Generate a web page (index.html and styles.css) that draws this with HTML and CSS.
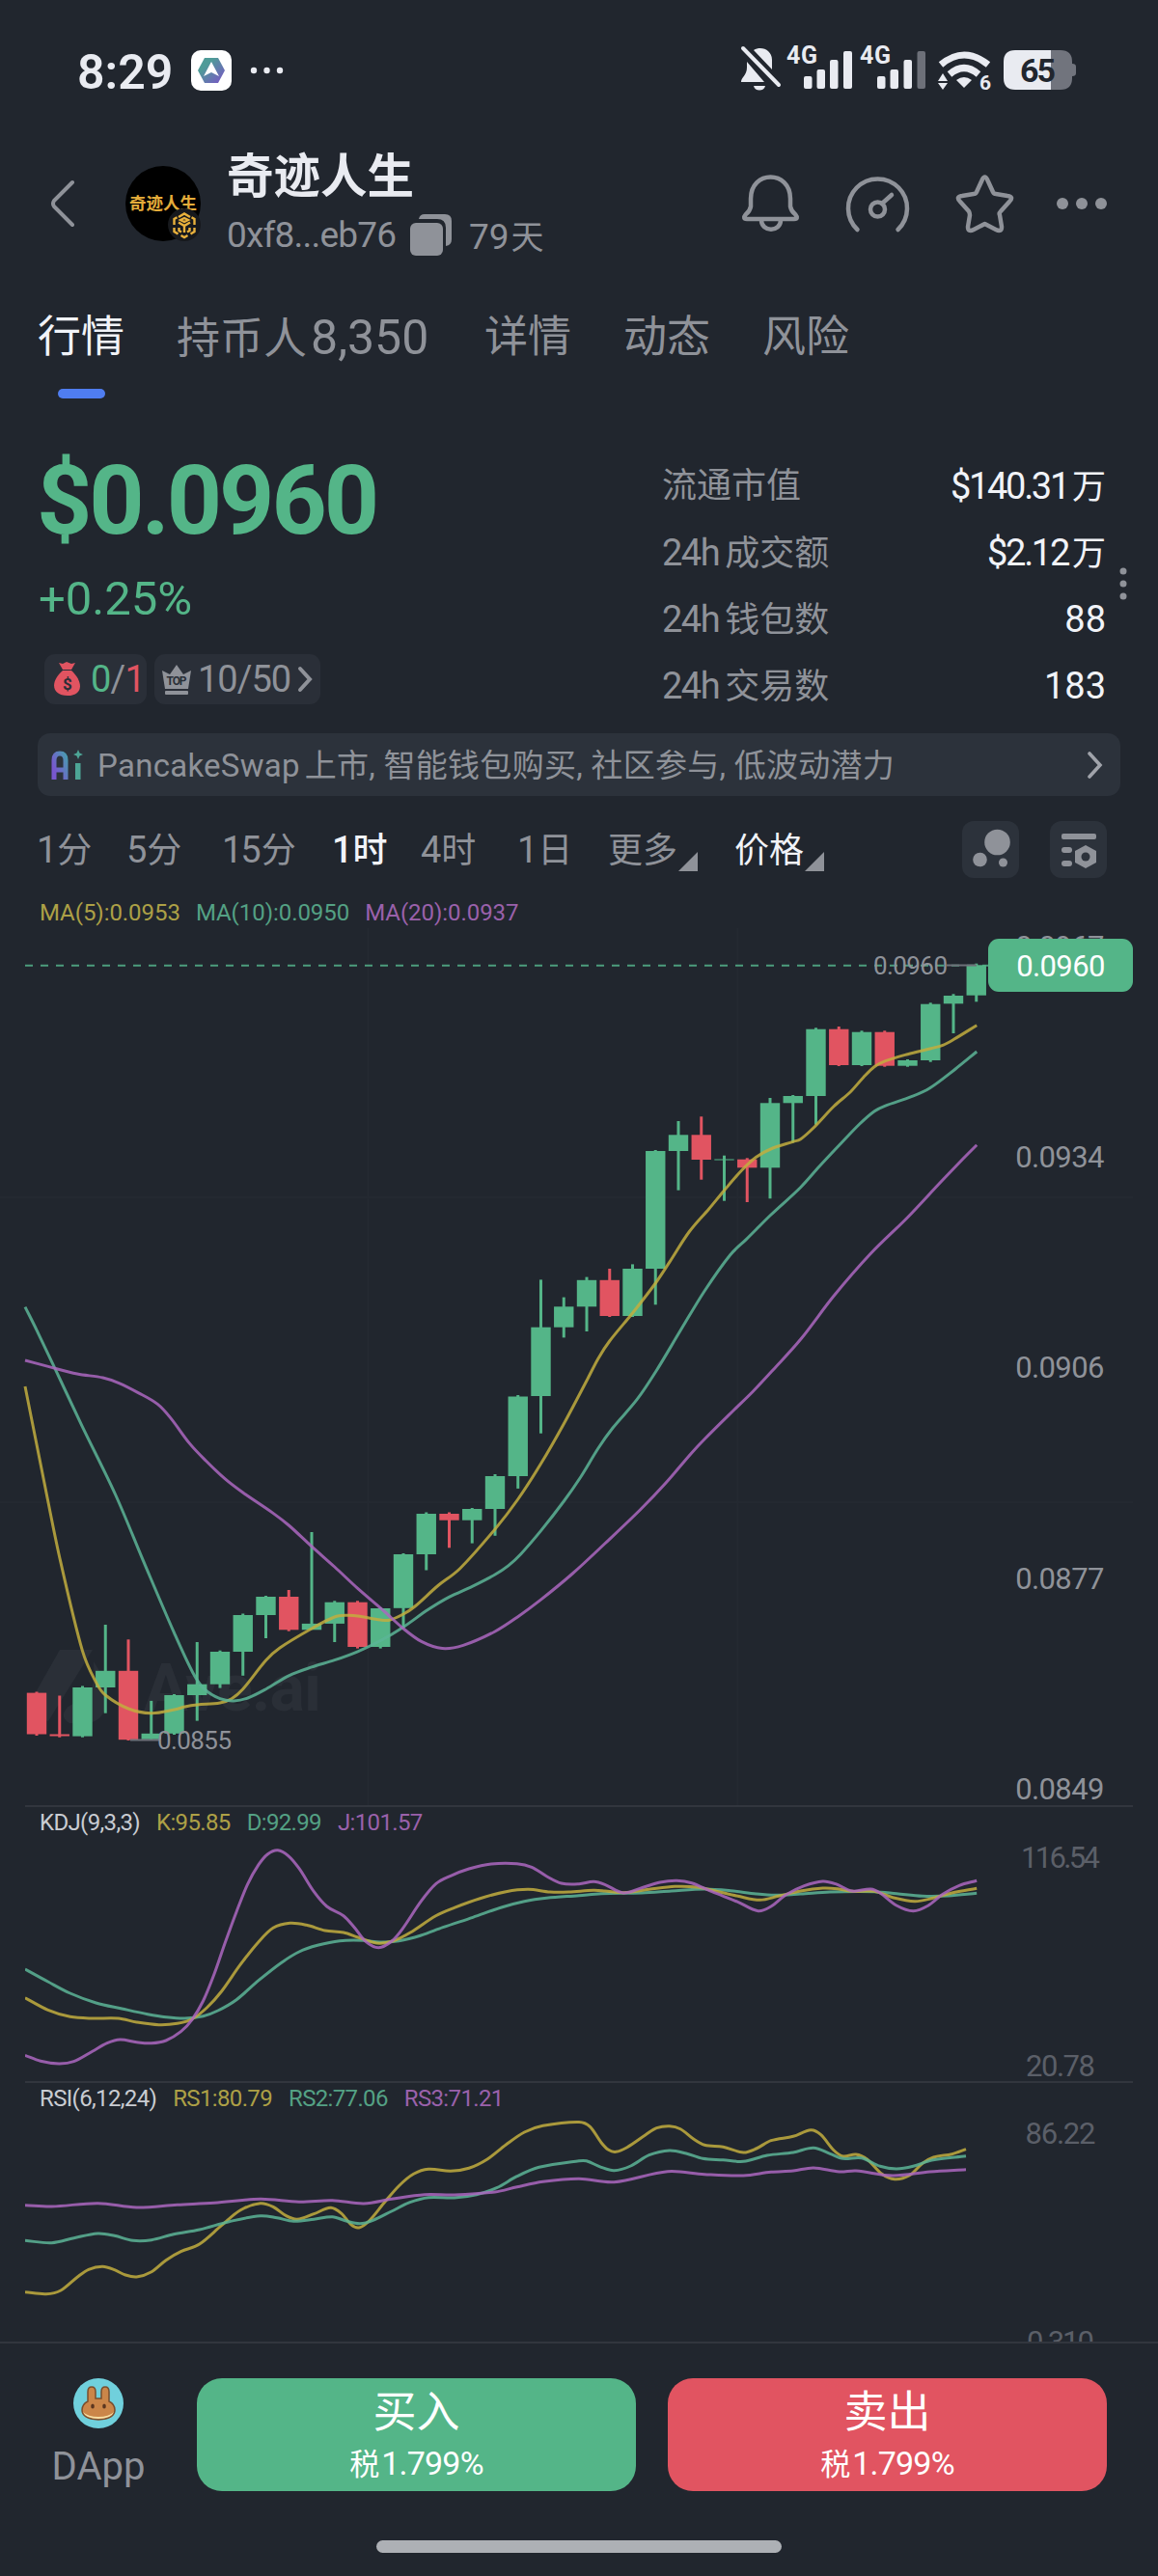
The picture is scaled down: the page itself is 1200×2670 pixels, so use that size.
FILE: index.html
```html
<!DOCTYPE html>
<html lang="zh-CN">

<head>
    <meta charset="UTF-8">
    <meta name="viewport" content="width=device-width, initial-scale=1.0">
    <title>奇迹人生</title>
    <link rel="stylesheet" href="styles.css">
</head>

<body>
    <!-- 状态栏 -->
    <div class="status">
        <span class="time">8:29</span>
        <svg class="app-icon" width="42" height="42" viewBox="0 0 42 42">
            <defs>
                <linearGradient id="hex" x1="0" y1="0" x2="1" y2="1">
                    <stop offset="0.3" stop-color="#4f9b98" />
                    <stop offset="1" stop-color="#7b52c8" />
                </linearGradient>
            </defs>
            <rect width="42" height="42" rx="10" fill="#fff" />
            <path d="M14 8h14l7 13-7 13H14L7 21z" fill="url(#hex)" />
            <path d="M21 12l8 15-8-4-8 4z" fill="#fff" />
        </svg>
        <svg class="more-dots" width="36" height="8" viewBox="0 0 36 8" fill="#e9ebf1">
            <circle cx="4" cy="4" r="3.2" /><circle cx="17.5" cy="4" r="3.2" /><circle cx="31" cy="4" r="3.2" />
        </svg>
        <svg class="signals" width="355" height="80" viewBox="765 33 355 80" fill="#e9ebf1">
            <!-- 静音 -->
            <path d="M781 52c8-5 19 0 19 10v10zM774 64l18 21h-24c0-5 6-7 6-15zM781 89h12c-1 6-11 6-12 0z" />
            <path d="M770 50l37 38" stroke="#e9ebf1" stroke-width="4" stroke-linecap="round" />
            <!-- 信号 -->
            <text x="815" y="66" class="net" textLength="32">4G</text>
            <rect x="833" y="79" width="8.5" height="13" rx="2" />
            <rect x="846.5" y="72" width="8.5" height="20" rx="2" />
            <rect x="860" y="62" width="8.5" height="30" rx="2" />
            <rect x="874" y="53" width="9" height="39" rx="2" />
            <text x="891" y="66" class="net" textLength="32">4G</text>
            <rect x="909" y="79" width="8.5" height="13" rx="2" />
            <rect x="922.5" y="72" width="8.5" height="20" rx="2" />
            <rect x="936.5" y="62" width="8.5" height="30" rx="2" />
            <rect x="950.5" y="53" width="8.5" height="39" rx="2" fill="#6d7079" />
            <!-- wifi -->
            <g fill="none" stroke="#e9ebf1" stroke-width="7">
                <path d="M975 67q24-20 49 0" />
                <path d="M984 77q15-13 30 0" />
            </g>
            <path d="M991 83q8-6 16 0l-8 8z" />
            <path d="M972 84l5-8 5 8zM972 86h10l-5 7z" />
            <text x="1015" y="93" class="wifi-num">6</text>
            <!-- 电量 -->
            <path d="M1052 52h37v41h-37q-12 0-12-12V64q0-12 12-12z" />
            <path d="M1089 52h10q12 0 12 12v2q4 0 4 3v7q0 3-4 3v2q0 12-12 12h-10z" fill="#71747d" />
            <text x="1057" y="85" class="battery" textLength="37">65</text>
        </svg>
    </div>

    <!-- 头部 -->
    <div class="header">
        <svg class="back" width="26" height="50" viewBox="0 0 26 50">
            <path d="M23 3L4 22q-2 3 0 6L23 47" fill="none" stroke="#8f9299" stroke-width="4" stroke-linecap="round" />
        </svg>
        <svg class="avatar" width="80" height="80" viewBox="0 0 80 80">
            <circle cx="39" cy="40" r="39" fill="#000" />
            <text x="4" y="46" class="avatar-text" textLength="70">奇迹人生</text>
            <circle cx="61" cy="62" r="17" fill="#17191d" />
            <g fill="none" stroke="#e9b13c" stroke-width="2.4">
                <path d="M55 54l6-3.500 6 3.500M50.500 62v-6l3-1.800M71.500 62v-6l-3-1.800M50.500 65v4l4 2.500M71.500 65v4l-4 2.500M57.500 73l3.500 2 3.500-2" />
                <path d="M55 59.500l6 3.500 6-3.500M61 63v7M55.500 65v3l2.500 1.500M66.500 65v3l-2.500 1.500M57 57l4-2 4 2-4 2z" />
            </g>
        </svg>
        <div class="title">
            <h1>奇迹人生</h1>
            <div class="sub">
                <span class="addr">0xf8...eb76</span>
                <svg width="45" height="43" viewBox="0 0 45 43" fill="#8f9299">
                    <path d="M9 5q1-5 6-5h21q7 0 7 7v19q0 6-6 7V14q0-9-9-9z" />
                    <rect x="0" y="9" width="34" height="34" rx="6" />
                </svg>
                <span class="age"><span class="num">79</span>天</span>
            </div>
        </div>
        <svg class="actions" width="390" height="66" viewBox="765 178 390 66" fill="none" stroke="#8f9299"
            stroke-width="4.5" stroke-linecap="round" stroke-linejoin="round">
            <path d="M779 206c0-30 41-30 41 0v8q1 5 5 8 4 5-1 5h-49q-5 0-1-5 4-3 5-8z" />
            <path d="M790 228c0 13 20 13 20 0" />
            <path d="M889.5 238a30.500 30.500 0 1 1 42 0" />
            <circle cx="910.5" cy="217" r="7.5" />
            <path d="M915 211l10-9" />
            <path d="M1018.500 187q3-7 6 0l5.500 12q1 2 3 2l12 2q7 1 2 6l-9 10q-2 2-1 4l2 12q0 6-6 3l-11.500-6-11.500 6q-6 3-6-3l2-12q0-2-1-4l-9-10q-5-5 2-6l12-2q2 0 3-2z" />
            <g fill="#8f9299" stroke="none">
                <circle cx="1102" cy="211" r="6" /><circle cx="1122" cy="211" r="6" /><circle cx="1142" cy="211" r="6" />
            </g>
        </svg>
    </div>

    <!-- 选项卡 -->
    <ul class="tabs">
        <li class="active">行情</li>
        <li>持币人<span class="num">8,350</span></li>
        <li>详情</li>
        <li>动态</li>
        <li>风险</li>
    </ul>

    <!-- 价格概览 -->
    <div class="overview">
        <div class="left">
            <div class="price">$0.0960</div>
            <div class="change">+0.25%</div>
            <div class="badges">
                <div class="badge bag">
                    <svg width="27" height="36" viewBox="0 0 27 36">
                        <path d="M5 1l4 1 4-2 5 2 4-1-4 7H9z" fill="#e15461" />
                        <path d="M9 9h9c13 12 12 26-4 26S-5 21 9 9z" fill="#e15461" />
                        <text x="13.5" y="29" class="bag-dollar">$</text>
                    </svg>
                    <span><i class="up">0</i>/<i class="down">1</i></span>
                </div>
                <div class="badge top">
                    <svg width="30" height="31" viewBox="0 0 30 31" fill="#8f9299">
                        <path d="M0 6l8 4 7-10 7 10 8-4-3 19H3z" />
                        <rect x="3" y="27" width="24" height="4" rx="1" />
                        <text x="15" y="21" class="top-text" textLength="21">TOP</text>
                    </svg>
                    <span>10/50</span>
                    <svg width="16" height="28" viewBox="0 0 16 28">
                        <path d="M3 3l10 11L3 25" fill="none" stroke="#8f9299" stroke-width="4" stroke-linecap="round" />
                    </svg>
                </div>
            </div>
        </div>
        <ul class="stats">
            <li>流通市值<b>$140.31<em>万</em></b></li>
            <li><span><span class="num">24h</span>成交额</span><b>$2.12<em>万</em></b></li>
            <li><span><span class="num">24h</span>钱包数</span><b class="plain">88</b></li>
            <li><span><span class="num">24h</span>交易数</span><b class="plain">183</b></li>
        </ul>
        <svg class="vdots" width="8" height="36" viewBox="0 0 8 36" fill="#8f9299">
            <circle cx="4" cy="5" r="3.5" /><circle cx="4" cy="18" r="3.5" /><circle cx="4" cy="31" r="3.5" />
        </svg>
    </div>

    <!-- AI 摘要 -->
    <div class="ai-bar">
        <svg width="34" height="32" viewBox="0 0 34 32">
            <defs>
                <linearGradient id="ai" x1="0" y1="1" x2="1" y2="0">
                    <stop offset="0.2" stop-color="#7857cf" />
                    <stop offset="1" stop-color="#4a9ab0" />
                </linearGradient>
            </defs>
            <path d="M3 31V11q0-7 6-7t6 7v20M3 21h12" fill="none" stroke="url(#ai)" stroke-width="5" />
            <rect x="25" y="14" width="5.5" height="17" fill="#4da596" />
            <path d="M28 0l1.500 3.500L33 5l-3.500 1.500L28 10l-1.500-3.500L23 5l3.500-1.500z" fill="#4da596" />
        </svg>
        <p><span class="swap">PancakeSwap</span>上市, 智能钱包购买, 社区参与, 低波动潜力</p>
        <svg width="16" height="28" viewBox="0 0 16 28">
            <path d="M2 2l11 12L2 26" fill="none" stroke="#a0a3aa" stroke-width="3.6" stroke-linecap="round" />
        </svg>
    </div>

    <!-- 周期 -->
    <div class="periods">
        <span><i>1</i>分</span>
        <span><i>5</i>分</span>
        <span><i>15</i>分</span>
        <span class="active"><i>1</i>时</span>
        <span><i>4</i>时</span>
        <span><i>1</i>日</span>
        <span class="drop">更多</span>
        <span class="drop white">价格</span>
        <button type="button" class="tool">
            <svg width="40" height="46" viewBox="0 0 40 46" fill="#8f9299">
                <circle cx="26.5" cy="15" r="13.3" /><circle cx="8.5" cy="33" r="7.3" /><circle cx="32.5" cy="36" r="4.5" />
            </svg>
        </button>
        <button type="button" class="tool">
            <svg width="38" height="38" viewBox="0 0 38 38" fill="#8f9299">
                <rect x="1" y="2" width="36" height="6" rx="2" />
                <rect x="1" y="16" width="11" height="6" rx="3" />
                <rect x="1" y="30" width="11" height="6" rx="3" />
                <path d="M26 14l11 6v12l-11 6-11-6V20z" />
                <circle cx="26" cy="26" r="4.5" fill="#2c323b" />
            </svg>
        </button>
    </div>

    <!-- K线 -->
    <div class="legend main-legend">
        <span class="c-y">MA(5):0.0953</span>
        <span class="c-g">MA(10):0.0950</span>
        <span class="c-p">MA(20):0.0937</span>
    </div>
    <svg id="kline" width="1200" height="909" viewBox="0 962 1200 909">
        <path d="M381.500 962V1871M764.500 962V1871M0 1241H1174M0 1557H1174" stroke="#242931" stroke-width="2" />
        <g class="watermark">
            <path d="M62 1710h34l-46 74c-14-4-19-17-13-30z" />
            <path d="M97 1722l12 20q7 43-20 44H72q-10-6-4-14 6-8 18-8 13-8 11-42z" />
            <text x="149" y="1773" textLength="184">Ave.ai</text>
        </g>
        <path d="M26 1000.700H1024" stroke="#4c9d7d" stroke-width="2" stroke-dasharray="8 8" />
        <g id="candles"></g>
        <g id="ma" class="lines"></g>
        <path d="M135 1803.500H165M981 1000.500H1012" stroke="#6d7079" stroke-width="2" />
        <text x="163" y="1812.5" class="mark" textLength="77">0.0855</text>
        <text x="905" y="1009.5" class="mark" textLength="77">0.0960</text>
        <g class="axis">
            <text x="1098" y="992">0.0967</text>
            <text x="1098" y="1210">0.0934</text>
            <text x="1098" y="1428">0.0906</text>
            <text x="1098" y="1647">0.0877</text>
            <text x="1098" y="1865">0.0849</text>
        </g>
        <rect x="1024" y="973" width="150" height="55" rx="11" fill="#54b588" />
        <text x="1099" y="1012" class="now">0.0960</text>
    </svg>

    <!-- KDJ -->
    <div class="pane">
        <div class="legend">
            <span class="name">KDJ(9,3,3)</span>
            <span class="c-y">K:95.85</span>
            <span class="c-g">D:92.99</span>
            <span class="c-p">J:101.57</span>
        </div>
        <svg width="1148" height="253" viewBox="26 1904 1148 253">
            <g id="kdj" class="lines"></g>
            <g class="axis dim">
                <text x="1099" y="1935.5" textLength="82">116.54</text>
                <text x="1099" y="2151.5" textLength="72">20.78</text>
            </g>
        </svg>
    </div>

    <!-- RSI -->
    <div class="pane">
        <div class="legend">
            <span class="name">RSI(6,12,24)</span>
            <span class="c-y">RS1:80.79</span>
            <span class="c-g">RS2:77.06</span>
            <span class="c-p">RS3:71.21</span>
        </div>
        <svg width="1148" height="237" viewBox="26 2190 1148 237">
            <g id="rsi" class="lines"></g>
            <g class="axis dim">
                <text x="1099" y="2221.5" textLength="73">86.22</text>
                <text x="1099" y="2438" textLength="70">0.310</text>
            </g>
        </svg>
    </div>

    <!-- 底部交易栏 -->
    <div class="footer">
        <div class="dapp">
            <svg width="52" height="52" viewBox="0 0 52 52">
                <circle cx="26" cy="26" r="26" fill="#70d0dc" />
                <path d="M15 24V14q0-5 4-5t4 5v7h6v-7q0-5 4-5t4 5v10q6 3 6 9 0 9-17 10-17-1-17-10 0-6 6-9z" fill="#cb8649" stroke="#7a4e2d" stroke-width="1.5" />
                <path d="M10 35q5 5 16 5t16-5q-3 7-16 7t-16-7z" fill="#f7dfa4" />
                <ellipse cx="20" cy="29" rx="1.8" ry="2.6" fill="#5b3620" />
                <ellipse cx="32" cy="29" rx="1.8" ry="2.6" fill="#5b3620" />
            </svg>
            <span>DApp</span>
        </div>
        <button type="button" class="trade buy">买入<small>税<span class="num">1.799%</span></small></button>
        <button type="button" class="trade sell">卖出<small>税<span class="num">1.799%</span></small></button>
    </div>
    <div class="home-bar"></div>

    <script src="chart.js"></script>
</body>

</html>
```
FILE: styles.css
```css
* {
    margin: 0;
    padding: 0;
    box-sizing: border-box;
}

body {
    width: 1200px;
    height: 2670px;
    overflow: hidden;
    background-color: #21262e;
    color: #8f9299;
    font-family: Roboto, "Noto Sans CJK SC", sans-serif;
}

ul {
    list-style: none;
}

i,
em {
    font-style: normal;
}

svg {
    display: block;
    flex-shrink: 0;
}

button {
    border: none;
    font-family: inherit;
}

/* 状态栏 */
.status {
    display: flex;
    align-items: center;
    height: 146px;
    padding: 0 80px;
}

.time {
    width: 118px;
    padding-top: 3px;
    font-size: 50px;
    font-weight: 600;
    color: #e9ebf1;
}

.more-dots {
    margin-left: 19px;
}

.signals {
    margin-left: auto;
}

.net {
    font-size: 25px;
    font-weight: 700;
}

.wifi-num {
    font-size: 21px;
    font-weight: 700;
}

.battery {
    font-size: 34px;
    font-weight: 700;
    fill: #21262e;
}

/* 头部 */
.header {
    display: flex;
    align-items: center;
    height: 130px;
    padding-left: 52px;
}

.avatar {
    margin-left: 52px;
}

.avatar-text {
    font-size: 17.5px;
    font-weight: 700;
    fill: #e5ad3a;
}

.title {
    width: 529px;
    margin-left: 25px;
}

.title h1 {
    height: 64px;
    line-height: 54px;
    font-size: 48.5px;
    font-weight: 700;
    color: #e9ebf1;
}

.sub {
    display: flex;
    align-items: center;
    height: 44px;
    font-size: 34px;
}

.addr {
    width: 190px;
    font-size: 37px;
    letter-spacing: -0.8px;
}

.age {
    margin-left: 16px;
    white-space: nowrap;
}

.age .num {
    font-size: 37px;
    margin-right: 2px;
}

/* 选项卡 */
.tabs {
    display: flex;
    gap: 54px;
    height: 137px;
    padding: 50px 0 0 39px;
    font-size: 45px;
    line-height: 48px;
}

.tabs li {
    display: flex;
    flex-direction: column;
    align-items: center;
    justify-content: space-between;
}

.tabs li:nth-child(2) {
    display: block;
    width: 265px;
    white-space: nowrap;
}

.tabs .num {
    margin-left: 4px;
    font-size: 50px;
}

.tabs .active {
    color: #f1f3f8;
}

.tabs .active::after {
    content: "";
    width: 49px;
    height: 10px;
    border-radius: 5px;
    background-color: #4f7df0;
}

/* 价格概览 */
.overview {
    display: flex;
    height: 347px;
    padding-left: 40px;
}

.left {
    width: 646px;
    padding-top: 46px;
}

.price {
    height: 120px;
    margin-left: -2px;
    line-height: 120px;
    font-size: 100px;
    font-weight: 700;
    letter-spacing: -3px;
    color: #54b588;
}

.change {
    height: 60px;
    margin-top: 12px;
    line-height: 60px;
    font-size: 49px;
    color: #54b588;
}

.badges {
    display: flex;
    gap: 8px;
    margin: 27px 0 0 6px;
}

.badge {
    display: flex;
    align-items: center;
    height: 52px;
    border-radius: 11px;
    background-color: #2a2f38;
    font-size: 38px;
}

.bag {
    width: 106px;
    padding-left: 10px;
    gap: 11px;
    letter-spacing: -0.8px;
}

.top {
    width: 172px;
    padding-left: 8px;
    gap: 7px;
    letter-spacing: -1px;
}

.bag-dollar {
    font-size: 17px;
    font-weight: 700;
    fill: #2a2f38;
    text-anchor: middle;
}

.top-text {
    font-size: 12px;
    font-weight: 700;
    fill: #2a2f38;
    text-anchor: middle;
    letter-spacing: 0;
}

.up {
    color: #54b588;
}

.down {
    color: #e15461;
}

.stats {
    width: 460px;
    padding-top: 57px;
}

.stats li {
    display: flex;
    justify-content: space-between;
    height: 69px;
    line-height: 69px;
    font-size: 36px;
}

.stats .num {
    margin-right: 6px;
    font-size: 38px;
    letter-spacing: -1.5px;
}

.stats b {
    font-size: 38px;
    font-weight: 400;
    letter-spacing: -2.3px;
    color: #f1f3f8;
}

.stats .plain {
    letter-spacing: 0;
}

.stats em {
    margin-left: 4px;
    font-size: 35px;
    letter-spacing: 0;
}

.vdots {
    margin: 174px 0 0 14px;
}

/* AI 摘要 */
.ai-bar {
    display: flex;
    align-items: center;
    height: 65px;
    margin: 0 39px;
    padding: 0 18px 0 14px;
    border-radius: 13px;
    background-color: #2c323b;
}

.ai-bar p {
    flex: 1;
    margin: -3px 0 0 14px;
    font-size: 33px;
    letter-spacing: 0.27px;
    white-space: pre;
}

.swap {
    margin-right: 5px;
}

/* 周期 */
.periods {
    display: grid;
    grid-template-columns: 93px 99px 114px 92px 100px 94px 131px 236px 91px 60px;
    align-items: center;
    height: 59px;
    margin-top: 26px;
    padding-left: 38px;
    font-size: 36px;
}

.periods span {
    margin-top: -6px;
}

.periods i {
    margin-right: 2px;
    font-size: 38px;
    letter-spacing: -2px;
}

.periods .active {
    font-weight: 500;
    color: #f1f3f8;
}

.periods .white {
    color: #f1f3f8;
}

.drop::after {
    content: "";
    display: inline-block;
    margin: 0 0 -9px 1px;
    border-left: 20px solid transparent;
    border-bottom: 20px solid #8f9299;
}

.tool {
    display: flex;
    align-items: center;
    justify-content: center;
    width: 59px;
    height: 59px;
    border-radius: 12px;
    background-color: #2c323b;
}

/* 图例 */
.legend {
    display: flex;
    gap: 17px;
    height: 31px;
    padding-left: 15px;
    line-height: 32px;
    font-size: 24px;
    letter-spacing: -0.65px;
    white-space: nowrap;
}

.main-legend {
    gap: 16px;
    height: 52px;
    padding: 20px 0 0 41px;
    letter-spacing: -0.05px;
}

.name {
    color: #c9ccd2;
}

.c-y {
    color: #ada046;
}

.c-g {
    color: #54a184;
}

.c-p {
    color: #9a61ab;
}

/* 图表 */
.lines path {
    fill: none;
    stroke-width: 3;
    stroke-linejoin: round;
    opacity: 0.85;
}

.watermark {
    fill: #2a2f37;
}

.watermark text {
    font-size: 68px;
    font-weight: 700;
}

.mark {
    font-size: 26px;
    fill: #8f9299;
}

.axis text,
.now {
    font-size: 31px;
    fill: #8f9299;
    text-anchor: middle;
    letter-spacing: -0.6px;
}

.axis.dim text {
    fill: #5b5f68;
    letter-spacing: 0;
}

text.now {
    fill: #fff;
}

.pane {
    margin: 0 26px;
    border-top: 2px solid #32363e;
}

.pane svg {
    overflow: hidden;
}

/* 底部交易栏 */
.footer {
    display: flex;
    height: 206px;
    padding-top: 36px;
    border-top: 2px solid #32363e;
}

.dapp {
    display: flex;
    flex-direction: column;
    align-items: center;
    width: 204px;
    font-size: 40px;
}

.dapp span {
    margin-top: 16px;
}

.trade {
    width: 455px;
    height: 117px;
    border-radius: 26px;
    color: #fff;
    font-size: 45px;
    line-height: 60px;
}

.trade small {
    display: block;
    font-size: 31px;
    line-height: 44px;
}

.trade .num {
    margin-left: 2px;
    font-size: 34px;
    letter-spacing: -0.8px;
}

.buy {
    background-color: #54b588;
}

.sell {
    margin-left: 33px;
    background-color: #e15461;
}

.home-bar {
    width: 420px;
    height: 13px;
    margin: 0 auto;
    border-radius: 7px;
    background-color: #adb0b5;
}
```
FILE: chart.js
```js
var GREEN = '#54b588';
var RED = '#e15461';

// 每根K线: [涨跌, 实体上, 实体下, 影线上, 影线下]
var candles = [
    [0, 1754.6, 1797.5, 1753.5, 1799], [0, 1797.5, 1799.5, 1757.5, 1800.7], [1, 1749, 1799.6, 1747.5, 1800.7],
    [1, 1731.8, 1749, 1684, 1775.7], [0, 1731.8, 1803.2, 1699.3, 1804], [1, 1796.8, 1802.8, 1762.9, 1804],
    [1, 1757, 1796.8, 1756, 1798], [1, 1745.7, 1757, 1702, 1783.6], [1, 1712, 1745.7, 1710.7, 1749.6],
    [1, 1674, 1712, 1672.5, 1736.8], [1, 1655, 1674, 1654, 1698], [0, 1655, 1689.3, 1648, 1690.7],
    [1, 1682.9, 1689.3, 1588, 1689], [1, 1660.7, 1682.9, 1659.3, 1702], [0, 1660.7, 1707, 1659.3, 1708.6],
    [1, 1667, 1707, 1666, 1708.6], [1, 1611, 1666.8, 1610, 1687], [1, 1569, 1611, 1567.5, 1627.5],
    [0, 1569, 1575.7, 1567.5, 1604.3], [1, 1564, 1575.7, 1563, 1599.6], [1, 1530, 1564, 1528, 1591.8],
    [1, 1447.5, 1530, 1446, 1542.9], [1, 1375.7, 1447, 1326.4, 1485.7], [1, 1354.3, 1375.7, 1344.6, 1386.4],
    [1, 1326.8, 1354.3, 1323.6, 1380], [0, 1326.8, 1364, 1315, 1365], [1, 1315, 1364, 1310.4, 1365],
    [1, 1193, 1315, 1192, 1352.3], [1, 1176.3, 1193, 1162, 1233.7], [0, 1176.3, 1202, 1157.3, 1222.7],
    [1, 1201.5, 1202.5, 1197.7, 1244.7], [0, 1201.7, 1210.3, 1200.3, 1246], [1, 1143.3, 1210.3, 1138, 1242.3],
    [1, 1136, 1143.3, 1135, 1184.3], [1, 1066.7, 1136, 1065.3, 1165.7], [0, 1066.7, 1104, 1064, 1105],
    [1, 1069.7, 1104, 1068.3, 1105], [0, 1069.7, 1104.7, 1068.3, 1105.7], [1, 1099, 1104.7, 1098, 1105.7],
    [1, 1040.7, 1099, 1039.3, 1100.7], [1, 1032, 1040.3, 1030.3, 1071], [1, 1000.3, 1031.7, 998.7, 1038.3]
];

var ma = [
    ['#c2ae3e', [26, 1437, 45.7, 1535.7, 61.7, 1614, 85.3, 1710.7, 100, 1744.6, 109.3, 1757, 133, 1771, 156.7, 1775.7,
        180.7, 1772, 191.7, 1769, 204.3, 1767, 228, 1765, 240, 1760.7, 251.7, 1750.7, 275.7, 1720.7, 290, 1708, 323, 1688,
        346.7, 1676, 360, 1674.3, 370.7, 1675, 394.3, 1679, 403.3, 1679.3, 418, 1673, 430, 1665, 453.3, 1644,
        476.7, 1625.7, 513.3, 1584.6, 536.7, 1554, 560.7, 1516.8, 584.3, 1475.7, 608, 1431, 620, 1407.9, 631.7, 1390,
        655.7, 1360.7, 679.3, 1330, 694, 1307.9, 714, 1277, 734.7, 1253, 750.4, 1234, 768.4, 1213.3, 783.7, 1199.3,
        798.6, 1191, 822, 1183.3, 829.6, 1180.7, 843, 1169, 864, 1146.7, 881.3, 1131.7, 894.7, 1116.7, 906, 1105.7,
        917.6, 1099.7, 940.6, 1092.7, 964.7, 1086.7, 977, 1083.3, 988.4, 1077.3, 1012.2, 1062.7]],
    ['#5cb596', [26, 1354.6, 38, 1378.6, 56.7, 1417.9, 85.3, 1478.6, 120, 1550, 150, 1621.4, 180.7, 1692.9, 200, 1734,
        211.7, 1750.7, 228, 1760.7, 242.3, 1762.9, 256.7, 1760, 275.7, 1750.7, 299.3, 1736.8, 323, 1727.9,
        346.7, 1720.7, 370.7, 1711.8, 394.3, 1700.5, 418, 1686.4, 443.3, 1668.6, 465.3, 1655.4, 489.3, 1644.3,
        513, 1632, 526.7, 1622.9, 540, 1610.4, 560.7, 1586.4, 584.3, 1556, 601.7, 1531, 620, 1501, 635, 1480,
        660, 1450.7, 680, 1421, 705, 1379.3, 730, 1338.2, 756.7, 1300.7, 773.3, 1284.6, 799, 1259, 829.6, 1230.7,
        848.8, 1209.3, 869.4, 1187.3, 890.8, 1165, 906.2, 1151.7, 916.9, 1146.3, 944.4, 1136.7, 963.6, 1127.7,
        990.4, 1107.7, 1012.2, 1090]],
    ['#ac67bf', [26, 1410, 50, 1416.4, 80, 1424, 106.7, 1428, 123.3, 1433.6, 143.3, 1443.6, 163.3, 1455.4,
        176.7, 1469.6, 196.7, 1496.4, 213.3, 1514, 233.3, 1532.9, 251.7, 1547, 283.3, 1568.6, 299.3, 1581,
        323, 1602.9, 346.7, 1624, 370.7, 1646.4, 398, 1670, 418, 1688, 436.7, 1701.4, 458.3, 1708.6, 480, 1705.4,
        513, 1691, 536.7, 1675.7, 560.7, 1657.9, 593.3, 1631, 626.7, 1600, 663.3, 1565, 690, 1537, 716.7, 1506,
        730, 1491.8, 760, 1462, 780, 1442.5, 801, 1420, 829.6, 1388.3, 864, 1343.3, 902.3, 1299.3, 940.6, 1261.7,
        975, 1225, 998, 1201, 1012.2, 1186.7]]
];

var kdj = [
    ['#5cb596', [26, 2041, 49.7, 2054, 72.7, 2066, 99.5, 2076, 126.3, 2082, 153, 2087.7, 172, 2090.7, 191.4, 2092,
        210.5, 2089.7, 225.8, 2084, 245, 2072.7, 268, 2052.7, 291, 2034.7, 310, 2023, 329, 2016.3, 352, 2011.7,
        377, 2011.3, 394, 2013, 413.3, 2011.7, 436.3, 2006, 459, 1997.7, 490, 1987.3, 520.5, 1976.7, 543.4, 1970.7,
        566.4, 1967.3, 600, 1964.7, 623, 1962.7, 665, 1962, 695.7, 1960, 730, 1958, 757, 1959.7, 783.7, 1963,
        803, 1964.3, 829.6, 1963, 860, 1961, 906, 1960.7, 929, 1962.7, 956, 1965.3, 982.7, 1965, 1012.2, 1962.3]],
    ['#c2ae3e', [26, 2070.7, 49.7, 2083.3, 72.7, 2090.3, 95.7, 2092, 122.5, 2092, 141.6, 2096, 164.6, 2098.7,
        183.7, 2097.3, 199, 2092.7, 214.3, 2081, 229.6, 2064, 248.8, 2036.7, 268, 2012.7, 283, 1998.3, 300.4, 1993.3,
        317.6, 1995.3, 336.8, 2001, 356, 2003, 371, 2008, 390.4, 2014, 407.6, 2011.7, 424.8, 2003.3, 451.6, 1985.7,
        470.7, 1977.3, 497.5, 1967.7, 524.3, 1960.7, 547.3, 1958.3, 570, 1961, 589.4, 1961, 615, 1959.3,
        626.8, 1960, 646, 1961.7, 672.7, 1958.3, 699.5, 1955.3, 722.5, 1956, 741.6, 1960, 764.6, 1965.3,
        787.5, 1969.3, 806.7, 1965.3, 829.6, 1960, 852.6, 1957, 868, 1957.7, 883, 1960.3, 906, 1960.3,
        925, 1966.7, 948, 1970.7, 967, 1967.3, 986.5, 1962, 1012.2, 1957.3]],
    ['#ac67bf', [26, 2130.3, 42, 2136.3, 61, 2139, 76.5, 2136.7, 95.7, 2126.3, 111, 2117.7, 124.4, 2114,
        141.6, 2116.7, 157, 2117.7, 172, 2115, 187.5, 2105.7, 199, 2093.3, 210.5, 2074, 222, 2046, 233.4, 2013.3,
        245, 1981.7, 256.4, 1953.3, 268, 1932.7, 277.5, 1921.7, 287.8, 1917.7, 298.5, 1923.3, 310, 1936.7,
        325.3, 1960.7, 338.7, 1976, 356, 1985.7, 367.4, 1998, 379, 2012.3, 392.3, 2018.7, 405.7, 2012.3,
        417, 1999.3, 436.3, 1970.7, 451.6, 1952.7, 467, 1944.3, 486, 1937, 509, 1932, 535.8, 1931.7, 551, 1935.3,
        566.4, 1944.7, 581.7, 1952, 600, 1952.7, 615.3, 1950.3, 626.8, 1953.3, 646, 1962, 665, 1956.7, 684, 1951,
        701.4, 1949.3, 716.7, 1951.7, 737.8, 1960.7, 764.6, 1971.3, 785.6, 1980.7, 799, 1976, 814.3, 1964,
        833.4, 1954.7, 852.6, 1950, 866, 1952.7, 883, 1960, 902.3, 1958, 912, 1962, 929, 1975, 946.3, 1980.7,
        961.6, 1975.3, 977, 1963.3, 994, 1954.3, 1012.2, 1949.3]]
];

var rsi = [
    ['#c2ae3e', [26, 2375.7, 47.8, 2377.7, 63, 2374, 80.4, 2360, 91.8, 2352.3, 106.4, 2349.3, 118.6, 2352.7,
        130, 2358, 141.6, 2360, 157, 2354.7, 172, 2342.7, 187.5, 2333.7, 206.7, 2326, 229.6, 2306.7, 248.8, 2291,
        269.8, 2283.7, 283, 2287.3, 296.6, 2296.7, 308, 2300.3, 325.3, 2294.7, 342.5, 2288.3, 354, 2294.3,
        363.6, 2305.7, 372, 2309, 382.7, 2301.7, 398, 2283.3, 413.3, 2265.7, 428.6, 2253.3, 444, 2248.3,
        467, 2250.3, 486, 2247.3, 505, 2238, 524.3, 2223, 543.4, 2210, 562.6, 2203.3, 600, 2199.5, 611.5, 2204.3,
        623, 2220.7, 630.6, 2228.3, 638.3, 2230.3, 649.8, 2225.7, 669, 2212.7, 680.4, 2205.7, 693.8, 2203.7,
        705.2, 2206.7, 718.6, 2217, 730, 2223.3, 749.3, 2225.3, 770.3, 2231, 783.7, 2227, 799, 2218.7,
        822, 2214.3, 840.3, 2207.7, 850.7, 2212.7, 864, 2228.7, 873.6, 2235, 887, 2233, 898.5, 2238, 913.8, 2253.3,
        927.2, 2258.7, 942.5, 2254.7, 956, 2242.3, 967.4, 2236, 986.5, 2232.7, 1001, 2227.7]],
    ['#5cb596', [26, 2322.3, 53.6, 2324.7, 76.5, 2319.7, 101.4, 2315, 118.6, 2317.3, 137.8, 2322.3, 157, 2321.7,
        180, 2315.7, 206.7, 2311, 237.3, 2302.7, 269.8, 2296.7, 287, 2298.7, 304.2, 2302.3, 325.3, 2300.3,
        344.4, 2297.7, 359.7, 2302.3, 373, 2304.7, 386.5, 2301.3, 405.7, 2292, 424.8, 2282.7, 444, 2277.7,
        470.7, 2278, 493.7, 2274.7, 514.7, 2267.7, 535.8, 2255.7, 558.7, 2246.3, 600, 2239.7, 607.7, 2239.8,
        623, 2246.3, 636.4, 2249.7, 653.6, 2245, 672.7, 2233.7, 693.8, 2229, 711, 2232, 728.2, 2237.3,
        749.3, 2238.7, 770.3, 2240.3, 795, 2234, 822, 2231, 843, 2226.3, 860.2, 2232.3, 873.6, 2237.3,
        892.8, 2236.7, 912, 2245.3, 929, 2248, 946.3, 2245.3, 965.5, 2239, 1001, 2234.7]],
    ['#ac67bf', [26, 2285.7, 53.6, 2287, 101.4, 2283.7, 141.6, 2288, 183.7, 2285.3, 222, 2283.3, 269.8, 2279.3,
        310, 2282.3, 344.4, 2280.7, 377, 2284, 405.7, 2279.3, 440, 2274.7, 470.7, 2275, 512.8, 2272, 535.8, 2266.7,
        562.6, 2261.3, 600, 2258.3, 636.4, 2261.7, 691.8, 2250.7, 730, 2253.7, 770.3, 2255, 799, 2251.3,
        822, 2250, 843, 2247, 869.8, 2251, 887, 2250, 925, 2255, 963.6, 2251, 1001, 2248.7]]
];

function add(parent, tag, attrs) {
    var el = document.createElementNS('http://www.w3.org/2000/svg', tag);
    for (var k in attrs) {
        el.setAttribute(k, attrs[k]);
    }
    parent.appendChild(el);
}

// 平滑曲线
function smooth(p) {
    var n = p.length / 2;
    var d = 'M' + p[0] + ' ' + p[1];
    for (var i = 0; i < n - 1; i++) {
        var a = Math.max(i - 1, 0) * 2, b = i * 2, c = b + 2, e = Math.min(i + 2, n - 1) * 2;
        var h = (p[c] - p[b]) / 3;
        var m1 = (p[c + 1] - p[a + 1]) / (p[c] - p[a]);
        var m2 = (p[e + 1] - p[b + 1]) / (p[e] - p[b]);
        d += 'C' + [p[b] + h, p[b + 1] + m1 * h, p[c] - h, p[c + 1] - m2 * h, p[c], p[c + 1]].join(' ');
    }
    return d;
}

function drawLines(id, lines) {
    var box = document.getElementById(id);
    lines.forEach(function (l) {
        add(box, 'path', { d: smooth(l[1]), stroke: l[0] });
    });
}

var box = document.getElementById('candles');
candles.forEach(function (c, i) {
    var x = 38 + i * 23.75;
    var color = c[0] ? GREEN : RED;
    add(box, 'rect', { x: x - 1.5, y: c[3], width: 3, height: c[4] - c[3], fill: color });
    add(box, 'rect', { x: x - 10.2, y: c[1], width: 20.4, height: c[2] - c[1], fill: color });
});

drawLines('ma', ma);
drawLines('kdj', kdj);
drawLines('rsi', rsi);
```
